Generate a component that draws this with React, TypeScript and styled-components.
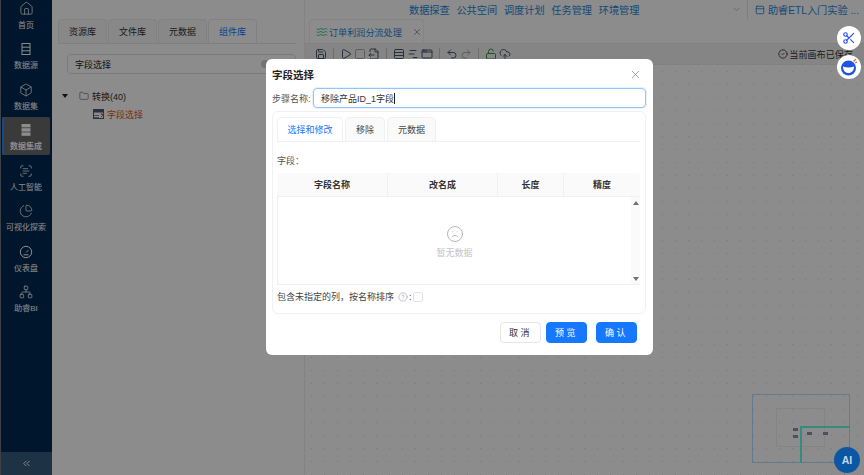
import React from 'react';
import styled, { createGlobalStyle } from 'styled-components';
import {
  Home, Box, Network, PieChart, ChevronsLeft, ChevronDown, Folder, X, Frown, CircleHelp, Scissors,
  Play, Square, Undo2, Redo2, LockOpen, CloudUpload, CircleCheck, Waves, PanelTop, Save, FileOutput, Rows3, ChartNoAxesGantt, AppWindow, ScanText,
} from 'lucide-react';

const GlobalStyle = createGlobalStyle`
  html, body { margin: 0; padding: 0; width: 864px; height: 475px; overflow: hidden; }
  * { box-sizing: border-box; }
  body { font-family: "Liberation Sans", "Noto Sans CJK SC", sans-serif; font-size: 9px; color: #262626; }
`;

const Shell = styled.div`
  position: relative;
  display: flex;
  width: 864px;
  height: 475px;
  overflow: hidden;
  background: #fff;
`;

const Sidebar = styled.nav`
  width: 52px;
  flex: none;
  display: flex;
  flex-direction: column;
  background: #002852;
  border-left: 1px solid #6d7784;
`;

const NavList = styled.div`
  flex: 1;
  margin-top: -5px;
`;

const NavItem = styled.div<{ $active?: boolean }>`
  width: 48px;
  height: 38.5px;
  margin: 0 0 2px 1px;
  display: flex;
  flex-direction: column;
  align-items: center;
  justify-content: flex-end;
  gap: 4px;
  padding-bottom: 3px;
  color: #fff;
  font-size: 8px;
  line-height: 11px;
  white-space: nowrap;
  border-radius: 2px;
  background: ${p => (p.$active ? '#6a6a6a' : 'transparent')};
  box-shadow: ${p => (p.$active ? 'inset 2px 0 0 #2a88ff' : 'none')};
  font-weight: ${p => (p.$active ? 700 : 400)};
`;

const Collapse = styled.div`
  height: 23px;
  display: flex;
  align-items: center;
  justify-content: center;
  color: #fff;
  background: #375c80;
`;

const Library = styled.section`
  width: 253px;
  flex: none;
  padding: 19px 8px 0 6px;
  border-right: 1px solid #efefef;
  background: #fff;
`;

const LibTabs = styled.div`
  display: flex;
  gap: 1px;
  height: 25px;
  border-bottom: 1px solid #e8e8e8;
`;

const LibTab = styled.div<{ $active?: boolean }>`
  width: 49px;
  display: flex;
  align-items: center;
  justify-content: center;
  font-size: 9px;
  border: 1px solid #ececec;
  border-bottom: 0;
  border-radius: 4px 4px 0 0;
  background: ${p => (p.$active ? '#fff' : '#f7f7f7')};
  color: ${p => (p.$active ? '#1677ff' : '#333')};
`;

const Search = styled.div`
  height: 20px;
  margin: 10px 0 0 9px;
  padding: 0 26px 0 7px;
  display: flex;
  align-items: center;
  justify-content: space-between;
  font-size: 9px;
  border: 1px solid #dedede;
  border-radius: 4px;
`;

const ClearDot = styled.span`
  width: 8px;
  height: 8px;
  border-radius: 50%;
  background: #d4d4d4;
`;

const Tree = styled.div`
  margin-top: 13px;
`;

const TreeRow = styled.div<{ $child?: boolean }>`
  height: 18px;
  display: flex;
  align-items: center;
  gap: ${p => (p.$child ? '2px' : '3px')};
  margin-left: ${p => (p.$child ? '35px' : '4px')};
  font-size: 9px;
  color: ${p => (p.$child ? '#e0541c' : '#333')};
`;

const Caret = styled.span`
  width: 0;
  height: 0;
  margin-right: 8px;
  border-left: 3px solid transparent;
  border-right: 3px solid transparent;
  border-top: 4px solid #222;
`;

const Work = styled.main`
  flex: 1;
  min-width: 0;
  display: flex;
  flex-direction: column;
`;

const TopBar = styled.header`
  height: 19px;
  display: flex;
  align-items: center;
  padding-left: 104px;
  gap: 6.7px;
  font-size: 10.2px;
  color: #1e88d8;
  white-space: nowrap;
`;

const ProjectSelect = styled.div`
  width: 102px;
  height: 19px;
  padding-right: 6px;
  display: flex;
  align-items: center;
  justify-content: flex-end;
  color: #aaa;
  border-right: 1px solid #e6e6e6;
`;

const ProjectName = styled.div`
  display: flex;
  align-items: center;
  gap: 3px;
`;

const FileTabs = styled.div`
  height: 25px;
  padding-left: 4px;
  border-bottom: 1px solid #ececec;
`;

const FileTab = styled.div`
  width: 115px;
  height: 25px;
  display: flex;
  align-items: center;
  gap: 1px;
  padding-left: 6px;
  font-size: 9.1px;
  white-space: nowrap;
  color: #1e88d8;
  border: 1px solid #f0f0f0;
  border-bottom: 0;
  border-radius: 4px 4px 0 0;
  svg:last-child { margin-left: 9px; color: #8a8a8a; }
`;

const Toolbar = styled.div`
  height: 21px;
  display: flex;
  align-items: center;
  gap: 2px;
  padding: 0 11px 0 10px;
  color: #4a5a6a;
  background: #f3f3f3;
  border-bottom: 1px solid #ececec;
`;

const Divider = styled.span`
  width: 1px;
  height: 12px;
  margin: 0 4px;
  background: #c8c8c8;
`;

const Saved = styled.div`
  margin-left: auto;
  display: flex;
  align-items: center;
  gap: 1px;
  font-size: 9.1px;
  color: #333;
`;

const Canvas = styled.div`
  position: relative;
  flex: 1;
  background-color: #fff;
  background-image: radial-gradient(#dedede 0.7px, transparent 0.8px);
  background-size: 13px 13px;
`;

const Minimap = styled.div`
  position: absolute;
  left: 447px;
  top: 329px;
  width: 98px;
  height: 69px;
  border: 1px solid #b8e0ff;
`;

const MiniFrame = styled.div`
  position: absolute;
  left: 23px;
  top: 13px;
  width: 49px;
  height: 39px;
  border: 1px solid #f0f0f0;
`;

const MiniView = styled.div`
  position: absolute;
  left: 47px;
  top: 31px;
  right: -1px;
  bottom: -1px;
  border-left: 2px solid #5fffe8;
  border-top: 2px solid #5fffe8;
`;

const MiniNode = styled.span<{ $x: number; $y: number }>`
  position: absolute;
  left: ${p => p.$x}px;
  top: ${p => p.$y}px;
  width: 5px;
  height: 3px;
  background: #8a94a8;
`;

const Mask = styled.div`
  position: absolute;
  inset: 0;
  background: rgba(0, 0, 0, 0.45);
`;

const Modal = styled.div`
  position: absolute;
  left: 266px;
  top: 59px;
  width: 387px;
  height: 296px;
  padding: 0 7px 0 6px;
  background: #fff;
  border-radius: 6px;
`;

const ModalHead = styled.div`
  height: 29px;
  display: flex;
  align-items: center;
  justify-content: space-between;
  padding: 1px 4px 0 0;
  font-size: 10.5px;
  font-weight: 700;
  color: #222;
  svg { color: #777; }
`;

const NameRow = styled.div`
  display: flex;
  align-items: center;
  color: #555;
  font-size: 9px;
  white-space: nowrap;
`;

const NameLabel = styled.label`
  width: 41px;
`;

const NameInput = styled.div`
  flex: 1;
  height: 20px;
  padding-left: 7px;
  display: flex;
  align-items: center;
  font-size: 9px;
  color: #333;
  border: 1px solid #91c4fb;
  border-radius: 4px;
  box-shadow: 0 0 0 1px #e6f1ff;
`;

const Cursor = styled.span`
  width: 1px;
  height: 11px;
  background: #222;
`;

const Card = styled.div`
  height: 203px;
  margin-top: 3px;
  padding: 5px 5px 0 4px;
  border: 1px solid #f1f1f1;
  border-radius: 6px;
`;

const ModalTabs = styled.div`
  height: 25px;
  display: flex;
  gap: 2px;
  border-bottom: 1px solid #f1f1f1;
`;

const ModalTab = styled.div<{ $w: number; $active?: boolean }>`
  width: ${p => p.$w}px;
  display: flex;
  align-items: center;
  justify-content: center;
  font-size: 9px;
  border: 1px solid #f0f0f0;
  border-bottom: ${p => (p.$active ? '1px solid #fff' : '0')};
  border-radius: 5px 5px 0 0;
  background: ${p => (p.$active ? '#fff' : '#fafafa')};
  color: ${p => (p.$active ? '#1677ff' : '#444')};
`;

const FieldLabel = styled.div`
  margin-top: 12px;
  height: 14px;
  line-height: 14px;
  color: #555;
  font-size: 9px;
`;

const Table = styled.div`
  margin-top: 5px;
  height: 112px;
  display: flex;
  flex-direction: column;
`;

const HeadRow = styled.div`
  height: 24px;
  display: grid;
  grid-template-columns: 111px 110px 66px 76px;
  background: #fafafa;
  border-radius: 4px 4px 0 0;
  border-bottom: 1px solid #f0f0f0;
`;

const HeadCell = styled.div`
  display: flex;
  align-items: center;
  justify-content: center;
  font-size: 9px;
  font-weight: 700;
  color: #333;
  border-right: 1px solid #f0f0f0;
  &:last-child { border-right: 0; }
`;

const TableBody = styled.div`
  flex: 1;
  display: flex;
  border-left: 1px solid #f0f0f0;
  border-bottom: 1px solid #f0f0f0;
`;

const EmptyState = styled.div`
  flex: 1;
  display: flex;
  flex-direction: column;
  align-items: center;
  padding-top: 28px;
  gap: 3px;
  color: #c4c4c4;
  font-size: 9px;
`;

const ScrollRail = styled.div`
  width: 9px;
  display: flex;
  flex-direction: column;
  align-items: center;
  justify-content: space-between;
  padding: 4px 0 3px;
  background: #fafafa;
`;

const Arrow = styled.span<{ $down?: boolean }>`
  width: 0;
  height: 0;
  border-left: 3px solid transparent;
  border-right: 3px solid transparent;
  border-${p => (p.$down ? 'top' : 'bottom')}: 4px solid #707070;
`;

const OptionRow = styled.div`
  margin-top: 5px;
  display: flex;
  align-items: center;
  gap: 1px;
  color: #444;
  font-size: 9px;
  svg { color: #888; margin-left: 3px; }
`;

const CheckBox = styled.span`
  width: 10px;
  height: 10px;
  border: 1px solid #e2e2e2;
  border-radius: 2px;
`;

const Footer = styled.div`
  margin-top: 8px;
  padding-right: 9px;
  display: flex;
  justify-content: flex-end;
`;

const Btn = styled.button<{ $primary?: boolean; $gap?: number }>`
  width: 41px;
  height: 21px;
  padding: 0;
  margin-left: ${p => p.$gap ?? 0}px;
  font-family: inherit;
  font-size: 9px;
  letter-spacing: 2.5px;
  border-radius: 4px;
  border: 1px solid ${p => (p.$primary ? '#1677ff' : '#e6e6e6')};
  background: ${p => (p.$primary ? '#1677ff' : '#fff')};
  color: ${p => (p.$primary ? '#fff' : '#333')};
`;

const FloatBtn = styled.div<{ $top: number }>`
  position: absolute;
  left: 837px;
  top: ${p => p.$top}px;
  width: 24px;
  height: 24px;
  display: flex;
  align-items: center;
  justify-content: center;
  border-radius: 50%;
  background: #fff;
  color: #2d55e8;
`;

const AiBadge = styled.div`
  position: absolute;
  left: 834px;
  top: 447px;
  width: 26px;
  height: 26px;
  display: flex;
  align-items: center;
  justify-content: center;
  border-radius: 50%;
  color: #c4d8ee;
  font-size: 10.5px;
  font-weight: 700;
  background: #0b57a4;
`;

const RowsIcon = ({ filled }: { filled?: boolean }) => (
  <svg width="14" height="14" viewBox="0 0 14 14" fill={filled ? '#fff' : 'none'} stroke={filled ? 'none' : '#fff'} strokeWidth="1">
    {filled ? (
      <>
        <rect x="2.5" y="1" width="9" height="3.4" />
        <rect x="2.5" y="5.2" width="9" height="3.4" />
        <rect x="2.5" y="9.4" width="9" height="3.4" />
      </>
    ) : (
      <>
        <rect x="3" y="1.5" width="8" height="11" />
        <path d="M3 5.2h8M3 8.8h8" />
      </>
    )}
  </svg>
);

const DashIcon = () => (
  <svg width="14" height="14" viewBox="0 0 14 14" fill="none" stroke="#fff" strokeWidth="1">
    <circle cx="7" cy="7" r="5.7" />
    <path d="M7 7.5l2.4-2.4M4.5 9.8h5" />
  </svg>
);

const FieldNodeIcon = () => (
  <svg width="12" height="11" viewBox="0 0 12 11">
    <rect x="0.5" y="0.5" width="10" height="9" fill="#fff" stroke="#4a5a70" />
    <rect x="0.5" y="0.5" width="10" height="3" fill="#4a5a70" />
    <path d="M1 6.5h5M1 8.5h5" stroke="#8090a5" />
    <path d="M8 4.5l3 3M11 4.5l-3 3" stroke="#e0541c" strokeWidth="1.2" />
  </svg>
);

const BotIcon = () => (
  <svg width="20" height="20" viewBox="0 0 20 20">
    <circle cx="9.5" cy="11" r="7.5" fill="#1d55e0" />
    <path d="M4 9.5c3.5 1.2 7.5 1.2 11 0c0 4-2.2 6.5-5.5 6.5S4 13.5 4 9.5z" fill="#fff" />
    <path d="M14.5 4.5l2.5-2.5M16 6l2-1" stroke="#ef6b3a" strokeWidth="1.3" />
  </svg>
);

const navItems = [
  { label: '首页', icon: <Home size={15} strokeWidth={1.2} /> },
  { label: '数据源', icon: <RowsIcon /> },
  { label: '数据集', icon: <Box size={14} strokeWidth={1.3} /> },
  { label: '数据集成', icon: <RowsIcon filled />, active: true },
  { label: '人工智能', icon: <ScanText size={14} strokeWidth={1.3} /> },
  { label: '可视化探索', icon: <PieChart size={14} strokeWidth={1.3} /> },
  { label: '仪表盘', icon: <DashIcon /> },
  { label: '助睿BI', icon: <Network size={14} strokeWidth={1.3} /> },
];

const topLinks = ['数据探查', '公共空间', '调度计划', '任务管理', '环境管理'];

export default function App() {
  return (
    <Shell>
      <GlobalStyle />
      <Sidebar>
        <NavList>
          {navItems.map(item => (
            <NavItem key={item.label} $active={item.active}>
              {item.icon}
              {item.label}
            </NavItem>
          ))}
        </NavList>
        <Collapse><ChevronsLeft size={11} /></Collapse>
      </Sidebar>

      <Library>
        <LibTabs>
          <LibTab>资源库</LibTab>
          <LibTab>文件库</LibTab>
          <LibTab>元数据</LibTab>
          <LibTab $active>组件库</LibTab>
        </LibTabs>
        <Search>字段选择<ClearDot /></Search>
        <Tree>
          <TreeRow><Caret /><Folder size={10} strokeWidth={1.2} />转换(40)</TreeRow>
          <TreeRow $child><FieldNodeIcon />字段选择</TreeRow>
        </Tree>
      </Library>

      <Work>
        <TopBar>
          {topLinks.map(t => <span key={t}>{t}</span>)}
          <ProjectSelect><ChevronDown size={9} /></ProjectSelect>
          <ProjectName><PanelTop size={10} />助睿ETL入门实验 ...</ProjectName>
        </TopBar>
        <FileTabs>
          <FileTab><Waves size={12} color="#2fc6a4" />订单利润分流处理<X size={10} /></FileTab>
        </FileTabs>
        <Toolbar>
          <Save size={12} />
          <Divider />
          <Play size={12} />
          <Square size={12} color="#aaa" />
          <FileOutput size={12} />
          <Divider />
          <Rows3 size={12} />
          <ChartNoAxesGantt size={12} />
          <AppWindow size={12} />
          <Divider />
          <Undo2 size={12} />
          <Redo2 size={12} color="#aaa" />
          <Divider />
          <LockOpen size={12} color="#2a9a3a" />
          <CloudUpload size={12} />
          <Saved><CircleCheck size={10} />当前画布已保存</Saved>
        </Toolbar>
        <Canvas>
          <Minimap>
            <MiniFrame />
            <MiniNode $x={40} $y={33} />
            <MiniNode $x={40} $y={40} />
            <MiniNode $x={54} $y={37} />
            <MiniNode $x={70} $y={37} />
            <MiniView />
          </Minimap>
        </Canvas>
      </Work>

      <Mask />

      <Modal>
        <ModalHead>字段选择<X size={13} strokeWidth={1.2} /></ModalHead>
        <NameRow>
          <NameLabel>步骤名称:</NameLabel>
          <NameInput>移除产品ID_1字段<Cursor /></NameInput>
        </NameRow>
        <Card>
          <ModalTabs>
            <ModalTab $w={66} $active>选择和修改</ModalTab>
            <ModalTab $w={40}>移除</ModalTab>
            <ModalTab $w={49}>元数据</ModalTab>
          </ModalTabs>
          <FieldLabel>字段：</FieldLabel>
          <Table>
            <HeadRow>
              <HeadCell>字段名称</HeadCell>
              <HeadCell>改名成</HeadCell>
              <HeadCell>长度</HeadCell>
              <HeadCell>精度</HeadCell>
            </HeadRow>
            <TableBody>
              <EmptyState>
                <Frown size={18} strokeWidth={1.1} color="#a8a8a8" />
                暂无数据
              </EmptyState>
              <ScrollRail><Arrow /><Arrow $down /></ScrollRail>
            </TableBody>
          </Table>
          <OptionRow>包含未指定的列，按名称排序<CircleHelp size={10} strokeWidth={1.2} />:<CheckBox /></OptionRow>
        </Card>
        <Footer>
          <Btn>取消</Btn>
          <Btn $primary $gap={5}>预览</Btn>
          <Btn $primary $gap={9}>确认</Btn>
        </Footer>
      </Modal>

      <FloatBtn $top={26}><Scissors size={14} /></FloatBtn>
      <FloatBtn $top={55}><BotIcon /></FloatBtn>
      <AiBadge>AI</AiBadge>
    </Shell>
  );
}
